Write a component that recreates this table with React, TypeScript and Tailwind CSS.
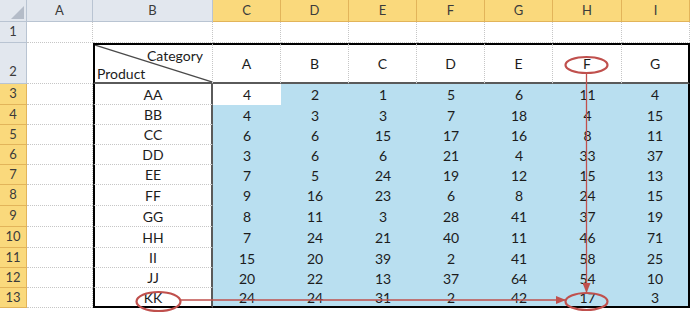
import React from 'react'

const colLetters = ['A', 'B', 'C', 'D', 'E', 'F', 'G', 'H', 'I']
const categories = ['A', 'B', 'C', 'D', 'E', 'F', 'G']

const rows: { product: string; values: number[] }[] = [
  { product: 'AA', values: [4, 2, 1, 5, 6, 11, 4] },
  { product: 'BB', values: [4, 3, 3, 7, 18, 4, 15] },
  { product: 'CC', values: [6, 6, 15, 17, 16, 8, 11] },
  { product: 'DD', values: [3, 6, 6, 21, 4, 33, 37] },
  { product: 'EE', values: [7, 5, 24, 19, 12, 15, 13] },
  { product: 'FF', values: [9, 16, 23, 6, 8, 24, 15] },
  { product: 'GG', values: [8, 11, 3, 28, 41, 37, 19] },
  { product: 'HH', values: [7, 24, 21, 40, 11, 46, 71] },
  { product: 'II', values: [15, 20, 39, 2, 41, 58, 25] },
  { product: 'JJ', values: [20, 22, 13, 37, 64, 54, 10] },
  { product: 'KK', values: [24, 24, 31, 2, 42, 17, 3] },
]

const grayHead = 'flex items-center justify-center bg-[#e2e7ee] border-r border-b border-[#b9c4d2] text-[#3b3b3b] text-[13px]'
const yellowHead = 'flex items-center justify-center bg-[#fad97c] border-r border-b border-[#e2b45a] text-[#3b3b3b] text-[13px]'
const blank = 'bg-white border-r border-b border-dotted border-[#c6c6c6]'

function Corner() {
  return (
    <div className="relative bg-[#e2e7ee] border-r border-b border-[#b9c4d2]">
      <svg className="absolute left-0 top-0" width="27" height="22" viewBox="0 0 27 22">
        <polygon points="24,6 24,19 11,19" fill="#b4bcc8" />
      </svg>
    </div>
  )
}

function DiagonalHeader() {
  return (
    <div className="relative bg-white border-t-2 border-l-2 border-b-2 border-t-black border-l-black border-b-[#5a5a5a] border-r border-r-[#c6c6c6] [border-right-style:dotted]">
      <svg className="absolute inset-0" width="100%" height="100%" preserveAspectRatio="none" viewBox="0 0 100 100">
        <line x1="0" y1="0" x2="100" y2="100" stroke="#4a4a4a" strokeWidth="1.2" vectorEffect="non-scaling-stroke" />
      </svg>
      <span className="absolute right-[9px] top-[0px]">Category</span>
      <span className="absolute left-[2px] bottom-[-2px]">Product</span>
    </div>
  )
}

export default function App() {
  return (
    <div className="relative w-[690px] h-[319px] overflow-hidden bg-white text-[14px] text-[#1c1c1c] font-['Lato','Open_Sans',sans-serif]">
      <div className="grid grid-cols-[27px_66px_120px_68px_68px_68px_68px_68px_69px_68px] grid-rows-[22px_21px_41px_21px_20px_20px_20px_20px_21px_21px_21px_20px_20px_20px]">
        {/* column headers */}
        <Corner />
        {colLetters.map((l, i) => (
          <div key={l} className={i < 2 ? grayHead : yellowHead}>{l}</div>
        ))}

        {/* row 1 */}
        <div className={grayHead}>1</div>
        {colLetters.map(l => <div key={'r1' + l} className={blank} />)}

        {/* row 2 */}
        <div className={grayHead + ' items-end pb-[2px]'}>2</div>
        <div className="bg-white border-b border-dotted border-[#c6c6c6]" />
        <DiagonalHeader />
        {categories.map((c, i) => (
          <div
            key={'cat' + c}
            className={
              i === categories.length - 1
                ? 'flex items-center justify-center bg-white border-t-2 border-b-2 border-r-2 border-t-black border-b-[#5a5a5a] border-r-black'
                : 'flex items-center justify-center bg-white border-t-2 border-b-2 border-t-black border-b-[#5a5a5a] border-r border-r-[#c6c6c6] [border-right-style:dotted]'
            }
          >
            {c}
          </div>
        ))}

        {/* data rows 3..13 */}
        {rows.map((r, ri) => {
          const last = ri === rows.length - 1
          return (
            <React.Fragment key={r.product}>
              <div className={yellowHead}>{ri + 3}</div>
              <div className="bg-white border-r border-b border-dotted border-[#c6c6c6]" />
              <div
                className={
                  last
                    ? 'flex items-center justify-center bg-white border-l-2 border-r-2 border-b-2 border-l-black border-r-[#5a5a5a] border-b-black'
                    : 'flex items-center justify-center bg-white border-l-2 border-r-2 border-l-black border-r-[#5a5a5a] border-b border-b-[#c6c6c6] [border-bottom-style:dotted]'
                }
              >
                {r.product}
              </div>
              {r.values.map((v, ci) => {
                const white = ri === 0 && ci === 0
                const right = ci === r.values.length - 1
                return (
                  <div
                    key={r.product + ci}
                    className={[
                      'flex items-center justify-center',
                      white ? 'bg-white' : 'bg-[#b9dff0]',
                      right ? 'border-r-2 border-r-black' : '',
                      last ? 'border-b-2 border-b-black' : '',
                    ].join(' ')}
                  >
                    {v}
                  </div>
                )
              })}
            </React.Fragment>
          )
        })}
      </div>

      {/* red annotations */}
      <svg className="absolute left-0 top-0 pointer-events-none" width="690" height="319" viewBox="0 0 690 319">
        <defs>
          <marker id="arrow" markerWidth="10" markerHeight="8" refX="9" refY="4" orient="auto" markerUnits="userSpaceOnUse">
            <polygon points="0,0 10,4 0,8" fill="#c0504d" />
          </marker>
        </defs>
        <ellipse cx="586.5" cy="65" rx="21" ry="8" fill="none" stroke="#c0504d" strokeWidth="2.2" />
        <line x1="586.5" y1="73" x2="586.5" y2="292" stroke="#c0504d" strokeWidth="1.3" markerEnd="url(#arrow)" />
        <ellipse cx="158.5" cy="301.5" rx="22" ry="9.5" fill="none" stroke="#c0504d" strokeWidth="2.2" />
        <line x1="180.5" y1="300" x2="565" y2="300" stroke="#c0504d" strokeWidth="1.3" markerEnd="url(#arrow)" />
        <ellipse cx="586.5" cy="301.5" rx="21" ry="8.5" fill="none" stroke="#c0504d" strokeWidth="2.2" />
      </svg>
    </div>
  )
}
